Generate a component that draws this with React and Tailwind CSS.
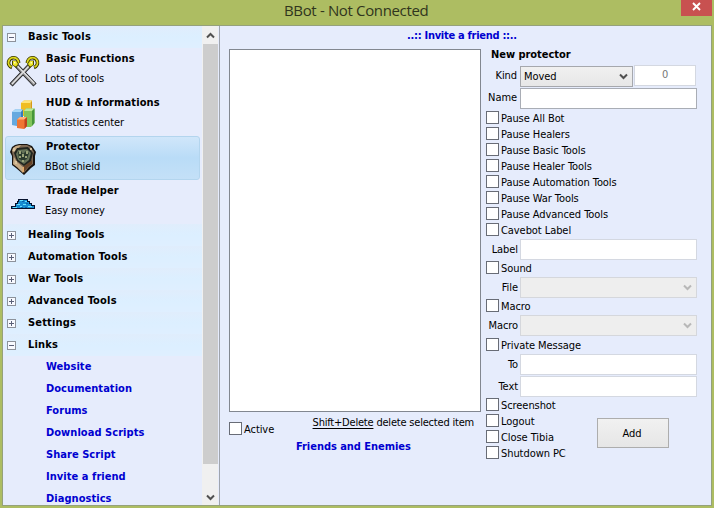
import React from "react";

const tools = [
  { name: "Basic Functions", note: "Lots of tools", icon: Swords },
  { name: "HUD & Informations", note: "Statistics center", icon: Bars },
  { name: "Protector", note: "BBot shield", icon: Shield, active: true },
  { name: "Trade Helper", note: "Easy money", icon: Crystals },
];
const groups = ["Healing Tools", "Automation Tools", "War Tools", "Advanced Tools", "Settings"];
const links = ["Website", "Documentation", "Forums", "Download Scripts", "Share Script", "Invite a friend", "Diagnostics"];
const pauses = ["Pause All Bot", "Pause Healers", "Pause Basic Tools", "Pause Healer Tools", "Pause Automation Tools", "Pause War Tools", "Pause Advanced Tools", "Cavebot Label"];

function Swords() {
  return (
    <svg width="34" height="32" viewBox="0 0 34 32">
      <path d="M10 10 29 30M24 10 5 30" stroke="#1c1c1c" strokeWidth="4.4" />
      <path d="M10 10 28.5 29.5M24 10 5.5 29.5" stroke="#8e8e90" strokeWidth="2.8" />
      <path d="M10.5 10 28.5 28.5M24 10 6 29" stroke="#e4e4e4" strokeWidth="1.2" />
      <g fill="none">
        <path d="M6 12.500A5 5 0 1 1 12.500 8M28 12.500A5 5 0 1 0 21.500 8" stroke="#383500" strokeWidth="3.6" />
        <path d="M5.500 12.200A5 5 0 1 1 12.500 8M28.500 12.200A5 5 0 1 0 21.500 8" stroke="#ddd71c" strokeWidth="1.9" />
      </g>
      <path d="M6 5.500h4l3 3-2.500 4.500-4.500-3zM28 5.500h-4l-3 3 2.500 4.500 4.500-3z" fill="#4a4604" />
      <path d="M7 6h3l2 3-2 2.500-3-1.500zM27 6h-3l-2 3 2 2.500 3-1.500z" fill="#ece624" />
      <path d="M8 7h1.500v1.500H8zM24.500 7H26v1.500h-1.500z" fill="#fffcc0" />
    </svg>
  );
}

function Bars() {
  return (
    <svg width="34" height="32" viewBox="0 0 34 32">
      <path d="m15 4 3-2.500h8L24.500 4v13H15z" fill="#f0bd20" />
      <path d="m15 4 3-2.500h8L24.500 4z" fill="#ffe477" />
      <path d="m24.500 4 1.500-2.500v15h-1.500z" fill="#d69b15" />
      <path d="m6 13 3-2.500h8L15 13v15l-9-2z" fill="#65a9df" />
      <path d="m6 13 3-2.500h8L15 13z" fill="#a7d8f7" />
      <path d="m15 13 2-2.500v15L15 28z" fill="#347cbd" />
      <path d="m18 12 2-2.500h8.500V24L25 28h-7z" fill="#82c45b" />
      <path d="m18 12 2-2.500h8.500L26 12z" fill="#bce89a" />
      <path d="m26 12 2.500-2.500V24L26 27z" fill="#46963a" />
      <path d="m11 20.500 3-2.500h7v9l-3 3-7-1z" fill="#ef7533" />
      <path d="m11 20.500 3-2.500h7l-2.500 2.500z" fill="#ffb278" />
      <path d="m18.500 20.500 2.500-2.500v9l-2.500 3z" fill="#bf421c" />
    </svg>
  );
}

function Shield() {
  return (
    <svg width="34" height="32" viewBox="0 0 34 32">
      <path d="M9 2 13 1h8l5 2 4 6-1 4v9l-4 3-7 7-8-7-4-3v-9L4 9l2-5z" fill="#17130f" />
      <path d="m10 3 4-1h7l4 2 3 5-1 4v8l-4 3-5 6-7-6-4-3v-8L6 9l1-4z" fill="#7b6853" />
      <path d="m10 3 5-1-3 4-4 3-2-1 1-3zM8 14l3 5 6 5v6l-6-6-4-3z" fill="#c5aa84" />
      <path d="m17 24 9-7v4l-4 3-5 6z" fill="#674326" />
      <path d="m11 5 11-1 5 6-2 8-7 5-7-5-3-8z" fill="#20251f" />
      <path d="m12 7 9-1 4 4-2 7-5 4-6-4-2-6z" fill="#647257" />
      <path d="m12 9 3-1 2 3 3-3 3 2-2 6-4 2-4-2z" fill="#2b3a2d" />
      <path d="M13 8h2v3h-2zM20 8h2v3h-2zM13 13h2v2h-2zM19 13h2v2h-2zM16 11h2v3h-2zM16 17h2v2h-2z" fill="#9aa379" />
      <path d="M7 5h2v3H7zM24 5h2v2h-2zM9 18h2v3H9z" fill="#d8c49f" />
      <path d="M16.500 24H18v5h-1.500z" fill="#e3a968" />
    </svg>
  );
}

function Crystals() {
  return (
    <svg width="34" height="32" viewBox="0 0 34 32" shapeRendering="crispEdges">
      <path d="M12 12h10v2h2v2h2v2h3v4H5v-3h4v-3h2v-2h1z" fill="#07122d" />
      <path d="M13 13h8v2h2v2h2v2h3v2H6v-1h4v-3h2v-2h1z" fill="#168cd2" />
      <path d="M14 13h3v1h-3zM19 14h2v1h-2zM11 17h3v1h-3zM17 17h3v1h-3zM7 20h4v1H7zM22 19h4v1h-4zM14 19h2v1h-2z" fill="#67e2ff" />
      <path d="M16 14h2v1h-2zM15 20h2v1h-2zM20 16h2v1h-2zM19 20h2v1h-2z" fill="#0860a7" />
    </svg>
  );
}

function Chevron({ up, color = "#505050" }) {
  return (
    <svg width="9" height="7" viewBox="0 0 9 7" className={up ? "rotate-180" : ""}>
      <path d="m1 1.500 3.500 3.500L8 1.500" fill="none" stroke={color} strokeWidth="2" />
    </svg>
  );
}

function Group({ name, open }) {
  return (
    <div className="flex h-[22px] w-[197px] shrink-0 items-center bg-linear-to-b from-[#e0edfc] via-[#dcefff] to-[#dfefff]">
      <svg width="9" height="9" viewBox="0 0 9 9" className="mt-px ml-[2px] shrink-0" shapeRendering="crispEdges">
        <path d="M.5.5h8v8h-8z" fill="#f8faff" stroke="#8d929b" />
        <path d={open ? "M2 4.500h5" : "M2 4.500h5M4.500 2v5"} stroke="#5b6178" />
      </svg>
      <span className="ml-3 -mt-px font-bold tracking-[0.18px]">{name}</span>
    </div>
  );
}

function Check({ children }) {
  return (
    <label className="flex h-4 items-start gap-[2px]">
      <span className="mt-px size-[13px] shrink-0 border border-[#686c76] bg-white" />
      <span className="mt-[2px]">{children}</span>
    </label>
  );
}

function Field({ label, select }) {
  return (
    <div className="flex h-[22px] items-center">
      <span className="w-[34px] pr-[2px] pt-px text-right">{label}</span>
      <div className={select ? "flex h-[21px] w-[177px] items-center justify-end border border-[#d5d7dc] bg-[#eee] pr-1" : "h-[21px] w-[177px] border border-[#d4d8e1] bg-white"}>
        {select && <Chevron color="#b8b8b8" />}
      </div>
    </div>
  );
}

export default function App() {
  return (
    <div className="flex h-[508px] w-[714px] flex-col overflow-hidden bg-[#adbd62] font-['DejaVu_Sans_Condensed','DejaVu_Sans',sans-serif] text-[11px] leading-[14px] tracking-[-0.07px] whitespace-nowrap text-black">
      <header className="flex h-[25px] shrink-0 items-start">
        <h1 className="ml-[284px] w-[399px] font-['Open_Sans',sans-serif] text-[15px] leading-5 tracking-[-0.35px] text-[#30351d]">BBot - Not Connected</h1>
        <button className="-ml-[2px] flex h-4 w-[31px] items-center justify-center bg-[#c85150]" aria-label="Close">
          <svg width="9" height="9" viewBox="0 0 9 9" className="-mt-[3px]"><path d="m1 1 7 7M8 1 1 8" stroke="white" strokeWidth="1.900" /></svg>
        </button>
      </header>
      <div className="ml-[2px] flex h-[481px] w-[710px] border border-[#95a17b] bg-[#e6ecfc]">
        <aside className="flex w-[217px] shrink-0 border-r border-[#9fa4ad]">
          <nav className="flex h-[479px] w-[199px] shrink-0 flex-col overflow-hidden pl-[2px]">
            <Group name="Basic Tools" open />
            {tools.map(({ name, note, icon: Icon, active }) => (
              <div key={name} className={active ? "flex h-11 w-[195px] shrink-0 rounded-[3px] border border-[#b3d5ee] bg-linear-to-b from-[#d0e6fa] via-[#b9dcf7] to-[#c4e0f7]" : "flex h-11 w-[195px] shrink-0 border border-transparent"}>
                <div className="w-10 pt-[6px]"><Icon /></div>
                <div className="pt-[3px]">
                  <div className="font-bold tracking-[0.12px]">{name}</div>
                  <div className="mt-[6px] -ml-px">{note}</div>
                </div>
              </div>
            ))}
            {groups.map((name) => <Group key={name} name={name} />)}
            <Group name="Links" open />
            {links.map((name) => <a key={name} className="h-[22px] shrink-0 pt-1 pl-[41px] font-bold tracking-[0.05px] text-[#0000d0]">{name}</a>)}
          </nav>
          <div className="flex w-[16px] flex-col items-center bg-[#f0f0f0]">
            <div className="flex h-[18px] items-center"><Chevron up /></div>
            <div className="h-[420px] w-[15px] bg-[#cdcdcd]" />
            <div className="mt-[30px]"><Chevron /></div>
          </div>
        </aside>
        <main className="flex min-w-0 flex-1 flex-col">
          <div className="flex h-[22px] shrink-0">
            <a className="ml-[187px] pt-[3px] font-bold tracking-[-0.28px] text-[#0000d0]">..:: Invite a friend ::..</a>
          </div>
          <div className="flex">
            <section className="ml-[9px] w-[252px]">
              <div className="mt-px h-[363px] border border-[#828790] bg-white" />
              <div className="flex h-[24px] justify-between">
                <div className="pt-[9px]"><Check>Active</Check></div>
                <div className="pt-1 pr-[7px] tracking-[-0.2px]"><span className="underline underline-offset-2">Shift+Delete</span> delete selected item</div>
              </div>
              <a className="mt-1 block pl-[67px] font-bold tracking-[-0.04px] text-[#0000d0]">Friends and Enemies</a>
            </section>
            <section className="ml-[5px] w-[211px]">
              <h2 className="h-[17px] pl-[5px] font-bold tracking-[-0.04px]">New protector</h2>
              <div className="flex h-[23px] items-start">
                <span className="w-[34px] pt-1 pr-[3px] text-right">Kind</span>
                <div className="mt-px flex h-[21px] w-[113px] items-center justify-between border border-[#a6a8ad] bg-linear-to-b from-[#f0f0f0] to-[#e7e7e7] pr-1 pl-[3px]"><span className="pt-px">Moved</span><Chevron /></div>
                <div className="ml-px h-[21px] w-[62px] border border-[#d4d8e1] bg-white pt-[2px] text-center text-[#777]">0</div>
              </div>
              <div className="flex h-[22px] items-start">
                <span className="w-[34px] pt-[3px] pr-[3px] text-right">Name</span>
                <div className="h-[21px] w-[177px] border border-[#a9adb5] bg-white" />
              </div>
              {pauses.map((name) => <Check key={name}>{name}</Check>)}
              <Field label="Label" />
              <Check>Sound</Check>
              <Field label="File" select />
              <Check>Macro</Check>
              <Field label="Macro" select />
              <div className="pt-px"><Check>Private Message</Check></div>
              <Field label="To" />
              <Field label="Text" />
              <div className="flex">
                <div className="w-[111px]">
                  {["Screenshot", "Logout", "Close Tibia", "Shutdown PC"].map((name) => <Check key={name}>{name}</Check>)}
                </div>
                <button className="mt-[21px] h-[30px] w-[72px] border border-[#adadad] bg-linear-to-b from-[#f1f1f1] to-[#e6e6e6] pr-[2px] pt-px">Add</button>
              </div>
            </section>
          </div>
        </main>
      </div>
    </div>
  );
}
